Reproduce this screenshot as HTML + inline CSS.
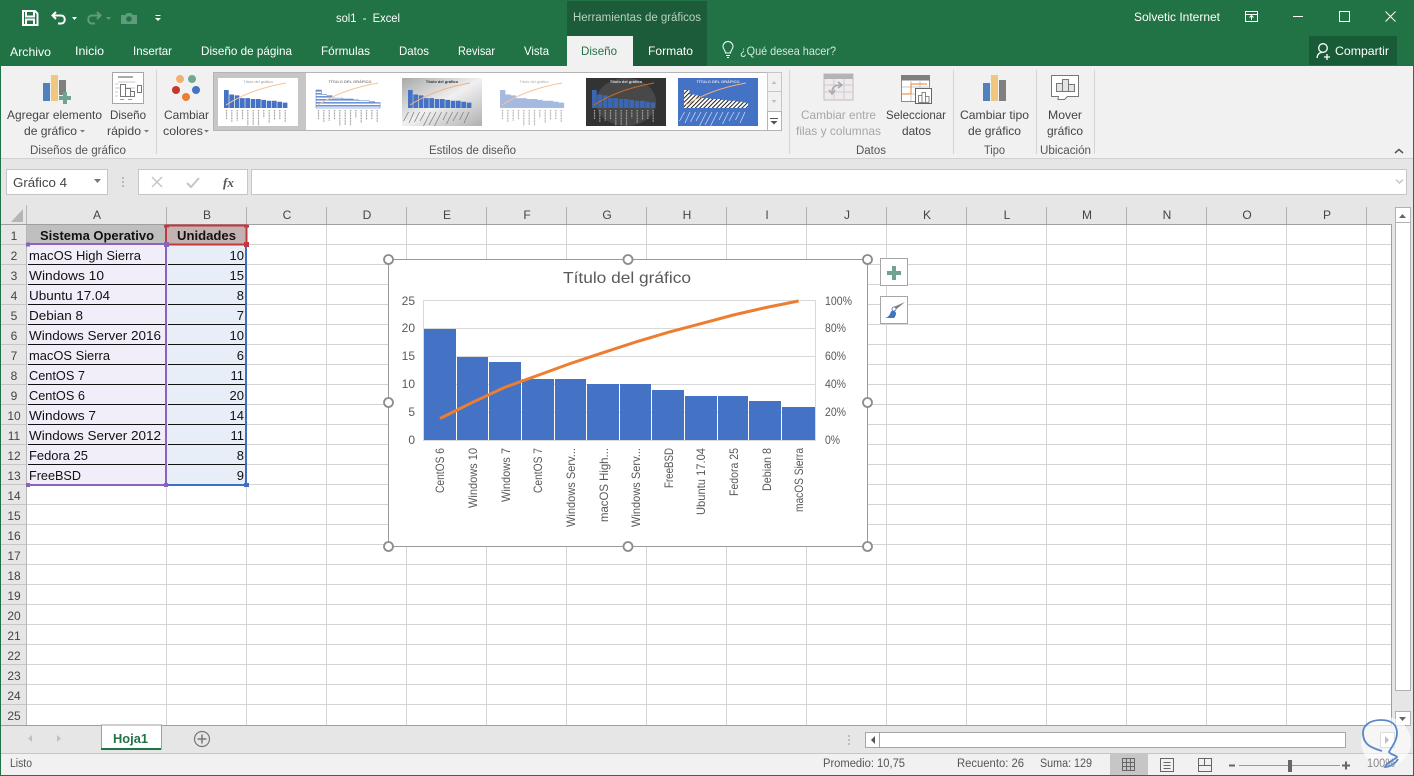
<!DOCTYPE html>
<html lang="es"><head><meta charset="utf-8"><title>sol1 - Excel</title>
<style>
html,body{margin:0;padding:0;background:#e6e6e6;width:1414px;height:776px;overflow:hidden}
svg{display:block;font-family:"Liberation Sans",sans-serif}
.t{fill:#fff;font-size:12px}
.r{fill:#444;font-size:12px}
.d{fill:#a6a6a6;font-size:12px}
.g{fill:#555;font-size:11.5px}
.h{fill:#444;font-size:12px;text-anchor:middle}
.c{fill:#111;font-size:13px}
.n{fill:#111;font-size:13px;text-anchor:end}
.a{fill:#595959;font-size:12px}
.e{fill:#595959;font-size:12px;text-anchor:end}
.s{fill:#555;font-size:11.5px}
</style></head><body>
<svg width="1414" height="776" viewBox="0 0 1414 776" xmlns="http://www.w3.org/2000/svg">
<defs>
<linearGradient id="gg" x1="0" y1="0" x2="1" y2="1"><stop offset="0" stop-color="#a8a8a8"/><stop offset=".5" stop-color="#f0f0f0"/><stop offset="1" stop-color="#b0b0b0"/></linearGradient>
<pattern id="hb" width="3" height="3" patternUnits="userSpaceOnUse"><rect width="3" height="3" fill="#fff"/><rect y="0" width="3" height="1.6" fill="#6f93d4"/></pattern>
<pattern id="hd" width="3" height="3" patternUnits="userSpaceOnUse" patternTransform="rotate(45)"><rect width="3" height="3" fill="#fff"/><rect width="1" height="3" fill="#222"/></pattern>
<path id="b" d="M6 12h4.7V30H6zM11.3 16.5h4.7V30h-4.7zM16.7 17.4h4.7V30h-4.7zM22 20.1h4.7V30H22zM27.3 20.1h4.7V30h-4.7zM32.7 21h4.7v9h-4.7zM38 21h4.7v9H38zM43.3 21.9H48V30h-4.7zM48.7 22.8h4.7V30h-4.7zM54 22.8h4.7V30H54zM59.3 23.7H64V30h-4.7zM64.7 24.6h4.7V30h-4.7z"/>
<path id="f" d="M6 12h5.4v4.5h5.3v.9h5.3v2.7h10.7v.9h10.6v.9h5.4v.9h10.6v.9h5.4v.9h5.4V30H6z"/>
<path id="c" d="M8 27C25 16 45 9 68 5" fill="none" stroke-width="1"/>
<path id="l" d="M8.5 32v9M13.8 32v12M19.2 32v11M24.5 32v9M29.8 32v16M35.2 32v15M40.5 32v16M45.8 32v8M51.2 32v13M56.5 32v10M61.8 32v9M67.2 32v12" fill="none" stroke-width="1.2" stroke-dasharray="1 .6"/>
<path id="s" d="M6.5 34l-5 9M12 34l-5 11M17.5 34l-5 10M23 34l-5 9M28.5 34l-7 14M34 34l-7 13M39.5 34l-7 14M45 34l-4 8M50.5 34l-6 12M56 34l-5 9M61.5 34l-4 8M67 34l-5 11" fill="none" stroke-width=".7"/>
</defs>

<!-- top green -->
<rect width="1414" height="776" fill="#e6e6e6"/>
<rect width="1414" height="66" fill="#217346"/>
<rect x="567" y="1" width="140" height="65" fill="#1d5c3a"/>
<rect x="567" y="36" width="66" height="30" fill="#f1f1f1"/>
<rect x="1309" y="36" width="88" height="29" fill="#185c37"/>

<!-- QAT -->
<path d="M23 11h12l2.500 2.500V25H23zM26 11.500v5h8v-5M26 25v-5.500h8V25" fill="none" stroke="#fff" stroke-width="2"/>
<path d="M56 12l-3.500 3.500L56 19M53 15.500h8c5 0 5 8 0 8h-3" fill="none" stroke="#fff" stroke-width="2"/>
<path d="M72 17h5l-2.500 3z" fill="#fff"/>
<path d="M97 12l3.500 3.500L97 19M100 15.500h-8c-5 0-5 8 0 8h3" fill="none" stroke="#5f9c7c" stroke-width="2"/>
<path d="M106 17h5l-2.500 3z" fill="#5f9c7c"/>
<path d="M121 15h4l2-2h4l2 2h4v9h-16z" fill="#5f9c7c"/><circle cx="129" cy="19" r="2.800" fill="#217346"/>
<path d="M155.500 15h5v1h-5zM155 18h6l-3 3z" fill="#fff"/>

<text x="336" y="22" class="t" textLength="64" lengthAdjust="spacingAndGlyphs" xml:space="preserve">sol1  -  Excel</text>
<text x="573" y="21" class="t" style="fill:#b6d2c1;font-size:11.500px" textLength="128" lengthAdjust="spacingAndGlyphs">Herramientas de gráficos</text>
<text x="1134" y="21" class="t" textLength="86" lengthAdjust="spacingAndGlyphs">Solvetic Internet</text>

<!-- window buttons -->
<path d="M1245.500 11.500h12v10h-12zM1245.500 14.500h12M1251.500 20v-4M1249.500 17.500l2-2 2 2" fill="none" stroke="#fff"/>
<path d="M1293 16.500h10" stroke="#fff"/>
<rect x="1339.500" y="11.500" width="10" height="10" fill="none" stroke="#fff"/>
<path d="M1385.500 11.500l10 10M1395.500 11.500l-10 10" stroke="#fff" fill="none"/>

<!-- tabs -->
<text x="10" y="56" class="t" textLength="41" lengthAdjust="spacingAndGlyphs">Archivo</text>
<text x="75" y="55" class="t" textLength="29" lengthAdjust="spacingAndGlyphs">Inicio</text>
<text x="133" y="55" class="t" textLength="39" lengthAdjust="spacingAndGlyphs">Insertar</text>
<text x="201" y="55" class="t" textLength="91" lengthAdjust="spacingAndGlyphs">Diseño de página</text>
<text x="321" y="55" class="t" textLength="49" lengthAdjust="spacingAndGlyphs">Fórmulas</text>
<text x="399" y="55" class="t" textLength="30" lengthAdjust="spacingAndGlyphs">Datos</text>
<text x="458" y="55" class="t" textLength="37" lengthAdjust="spacingAndGlyphs">Revisar</text>
<text x="524" y="55" class="t" textLength="25" lengthAdjust="spacingAndGlyphs">Vista</text>
<text x="581" y="55" class="t" style="fill:#217346" textLength="36" lengthAdjust="spacingAndGlyphs">Diseño</text>
<text x="648" y="55" class="t" textLength="45" lengthAdjust="spacingAndGlyphs">Formato</text>
<path d="M725.500 53c0-3-2.500-3.500-2.500-6.500a5 5 0 0 1 10 0c0 3-2.500 3.500-2.500 6.500zM726 55.500h4M727 57.500h2" fill="none" stroke="#fff"/>
<text x="740" y="55" class="t" style="fill:#d5e6dc" textLength="96" lengthAdjust="spacingAndGlyphs">¿Qué desea hacer?</text>
<circle cx="1323" cy="48" r="4.300" fill="none" stroke="#fff" stroke-width="1.300"/>
<path d="M1317 58c.5-4 2.500-5.500 5-5.500M1327 54v6M1324 57h6" fill="none" stroke="#fff" stroke-width="1.300"/>
<text x="1335" y="55" class="t" textLength="54" lengthAdjust="spacingAndGlyphs">Compartir</text>

<!-- ribbon -->
<rect x="1" y="66" width="1412" height="92" fill="#f1f1f1"/>
<rect x="1" y="158" width="1412" height="1" fill="#d0d0d0"/>
<path d="M156.500 70v84M789.500 70v84M953.500 70v84M1036.500 70v84M1094.500 70v84" stroke="#d4d4d4"/>

<rect x="43" y="83" width="7" height="18" fill="#4f81bd"/>
<rect x="51" y="75" width="7" height="26" fill="#f0c77f"/>
<rect x="59" y="80" width="7" height="15" fill="#7f7f7f"/>
<path d="M63 92h4v4h4v4h-4v4h-4v-4h-4v-4h4z" fill="#6fa58e"/>
<text x="7" y="119" class="r" textLength="95" lengthAdjust="spacingAndGlyphs">Agregar elemento</text>
<text x="24" y="135" class="r" textLength="53" lengthAdjust="spacingAndGlyphs">de gráfico</text>
<path d="M80 130h5l-2.500 2.500z" fill="#777"/>

<rect x="112.500" y="72.500" width="31" height="31" fill="#fff" stroke="#a6a6a6"/>
<rect x="118" y="76" width="15" height="2" fill="#aaa"/>
<path d="M115 84h3M115 88h3M115 92h3M115 96h3M118 82h17M118 88h17" stroke="#c8c8c8"/>
<path d="M120.500 96.500V84.500h5v12zM125.500 96.500V88.500h5v8zM130.500 96.500V91.500h4v5z" fill="#fff" stroke="#777"/>
<rect x="137.500" y="85.500" width="4" height="7" fill="#fff" stroke="#777"/>
<path d="M120 99.500h4M128 99.500h4" stroke="#999"/>
<text x="110" y="119" class="r" textLength="36" lengthAdjust="spacingAndGlyphs">Diseño</text>
<text x="107" y="135" class="r" textLength="34" lengthAdjust="spacingAndGlyphs">rápido</text>
<path d="M144 130h5l-2.500 2.500z" fill="#777"/>

<circle cx="180" cy="79" r="4" fill="#f0b070"/><circle cx="192" cy="79" r="4" fill="#70a890"/>
<circle cx="176" cy="90" r="4" fill="#c8352f"/><circle cx="196" cy="90" r="4" fill="#4472c4"/>
<circle cx="186" cy="97" r="4" fill="#ed7d31"/>
<text x="164" y="119" class="r" textLength="45" lengthAdjust="spacingAndGlyphs">Cambiar</text>
<text x="163" y="135" class="r" textLength="40" lengthAdjust="spacingAndGlyphs">colores</text>
<path d="M204 130h5l-2.500 2.500z" fill="#777"/>

<!-- gallery -->
<rect x="213.500" y="72.500" width="554" height="58" fill="#fff" stroke="#b4b4b4"/>
<rect x="214" y="73" width="92" height="57" fill="#c6c6c6"/>
<rect x="767.500" y="72.500" width="14" height="19" fill="#f1f1f1" stroke="#c6c6c6"/>
<rect x="767.500" y="91.500" width="14" height="20" fill="#f1f1f1" stroke="#c6c6c6"/>
<rect x="767.500" y="111.500" width="14" height="19" fill="#fff" stroke="#b4b4b4"/>
<path d="M771.500 84h5l-2.500-3z" fill="#c0c0c0"/><path d="M771.500 100h5l-2.500 3z" fill="#c0c0c0"/>
<path d="M770 118h8v1h-8zM770.500 121h7l-3.500 3.500z" fill="#555"/>

<g transform="translate(218 78)"><rect width="80" height="48" fill="#fff"/><text x="40" y="5" font-size="4" fill="#999" text-anchor="middle">Título del gráfico</text><use href="#b" fill="#4472c4"/><use href="#c" stroke="#f5c49b"/><use href="#l" stroke="#999"/></g>
<g transform="translate(310 78)"><rect width="80" height="48" fill="#fff"/><text x="40" y="5" font-size="4" font-weight="bold" fill="#888" text-anchor="middle">TÍTULO DEL GRÁFICO</text><use href="#f" fill="url(#hb)" stroke="#4472c4" stroke-width=".5"/><use href="#c" stroke="#f5c49b"/><use href="#l" stroke="#999"/></g>
<g transform="translate(402 78)"><rect width="80" height="48" fill="url(#gg)"/><text x="40" y="5" font-size="4" font-weight="bold" fill="#333" text-anchor="middle">Título del gráfico</text><use href="#b" fill="#4472c4"/><use href="#c" stroke="#f0b080"/><use href="#s" stroke="#777"/></g>
<g transform="translate(494 78)"><rect width="80" height="48" fill="#fff"/><text x="40" y="5" font-size="4" fill="#aaa" text-anchor="middle">Título del gráfico</text><use href="#f" fill="#a6b9e0"/><use href="#c" stroke="#f5c49b"/><use href="#l" stroke="#aaa"/></g>
<g transform="translate(586 78)"><rect width="80" height="48" fill="#333"/><ellipse cx="40" cy="24" rx="30" ry="24" fill="#484848"/><text x="40" y="5" font-size="4" font-weight="bold" fill="#ddd" text-anchor="middle">Título del gráfico</text><use href="#b" fill="#3b66b2"/><use href="#c" stroke="#c56a2c"/><use href="#l" stroke="#aaa"/></g>
<g transform="translate(678 78)"><rect width="80" height="48" fill="#4472c4"/><text x="40" y="5" font-size="4" font-weight="bold" fill="#dde" text-anchor="middle">TÍTULO DEL GRÁFICO</text><use href="#f" fill="url(#hd)"/><use href="#c" stroke="#f0b080"/><use href="#s" stroke="#d8e2f4"/></g>

<!-- datos icons -->
<rect x="824" y="74" width="29" height="26" fill="#eeeaee" stroke="#c0bcc0"/>
<rect x="824" y="74" width="29" height="5" fill="#b5b3b5"/>
<path d="M824 85h29M824 92h29M834 79v21M844 79v21" stroke="#cfcbcf"/>
<path d="M832 92c0-5 3-7 9-7M838 82l4 3-4 3M829 90l3 4 3-4" fill="none" stroke="#a8a8a8" stroke-width="1.500"/>
<rect x="901.500" y="75.500" width="28" height="26" fill="#fff" stroke="#8c8c8c"/>
<rect x="901" y="75" width="29" height="5.500" fill="#7f7f7f"/>
<path d="M902 87h28M902 94h28M911 80v21M920 80v21" stroke="#c8c8c8"/>
<path d="M911 94V84h16M902 94h9" fill="none" stroke="#ed7d31"/>
<rect x="915.500" y="88.500" width="16" height="15" fill="#fff" stroke="#666"/>
<path d="M918.500 102.500v-7h3.500v7zM922 102.500v-10h3.500v10zM925.500 102.500v-6h3.500v6z" fill="#fff" stroke="#666" stroke-width=".8"/>
<rect x="983" y="83" width="7" height="18" fill="#4f81bd"/>
<rect x="991" y="75" width="7" height="26" fill="#f0c77f"/>
<rect x="999" y="80" width="7" height="21" fill="#7f7f7f"/>
<path d="M1051.500 75.500h27v21h-11l-3 3h-6.500l.5-3h-7z" fill="#fff" stroke="#777"/>
<path d="M1056.500 91.500v-8h6v8zM1062.500 91.500v-12h6v12zM1068.500 91.500v-7h6v7z" fill="#e4e4e4" stroke="#777"/>
<text x="801" y="119" class="d" textLength="75" lengthAdjust="spacingAndGlyphs">Cambiar entre</text>
<text x="796" y="135" class="d" textLength="85" lengthAdjust="spacingAndGlyphs">filas y columnas</text>
<text x="886" y="119" class="r" textLength="60" lengthAdjust="spacingAndGlyphs">Seleccionar</text>
<text x="902" y="135" class="r" textLength="29" lengthAdjust="spacingAndGlyphs">datos</text>
<text x="960" y="119" class="r" textLength="69" lengthAdjust="spacingAndGlyphs">Cambiar tipo</text>
<text x="968" y="135" class="r" textLength="53" lengthAdjust="spacingAndGlyphs">de gráfico</text>
<text x="1048" y="119" class="r" textLength="34" lengthAdjust="spacingAndGlyphs">Mover</text>
<text x="1047" y="135" class="r" textLength="36" lengthAdjust="spacingAndGlyphs">gráfico</text>
<text x="30" y="154" class="g" textLength="96" lengthAdjust="spacingAndGlyphs">Diseños de gráfico</text>
<text x="429" y="154" class="g" textLength="87" lengthAdjust="spacingAndGlyphs">Estilos de diseño</text>
<text x="856" y="154" class="g" textLength="30" lengthAdjust="spacingAndGlyphs">Datos</text>
<text x="984" y="154" class="g" textLength="21" lengthAdjust="spacingAndGlyphs">Tipo</text>
<text x="1040" y="154" class="g" textLength="51" lengthAdjust="spacingAndGlyphs">Ubicación</text>
<path d="M1395 153l4-3.500 4 3.500" fill="none" stroke="#555" stroke-width="1.500"/>

<!-- formula bar -->
<rect x="6.500" y="169.500" width="101" height="25" fill="#fff" stroke="#c6c6c6"/>
<text x="13" y="187" fill="#444" font-size="12.500" textLength="54" lengthAdjust="spacingAndGlyphs">Gráfico 4</text>
<path d="M94 179h7l-3.500 4z" fill="#777"/>
<path d="M123 177v2M123 181v2M123 185v2" stroke="#aaa" stroke-width="1.500"/>
<rect x="138.500" y="169.500" width="109" height="25" fill="#fff" stroke="#c6c6c6"/>
<path d="M152 177l10 10M162 177l-10 10" stroke="#c6c6c6" stroke-width="1.500"/>
<path d="M187 183l4 4 8-9" fill="none" stroke="#c6c6c6" stroke-width="2"/>
<text x="223" y="187" font-family="Liberation Serif,serif" font-style="italic" font-weight="bold" font-size="13" fill="#555">fx</text>
<rect x="251.500" y="169.500" width="1155" height="25" fill="#fff" stroke="#c6c6c6"/>
<path d="M1396 179.500l3.500 3.500 3.500-3.500" fill="none" stroke="#c6c6c6" stroke-width="1.500"/>

<!-- sheet area -->
<rect x="27" y="225" width="1365" height="500" fill="#fff"/>
<path d="M27 244.500H1391M27 264.500H1391M27 284.500H1391M27 304.500H1391M27 324.500H1391M27 344.500H1391M27 364.500H1391M27 384.500H1391M27 404.500H1391M27 424.500H1391M27 444.500H1391M27 464.500H1391M27 484.500H1391M27 504.500H1391M27 524.500H1391M27 544.500H1391M27 564.500H1391M27 584.500H1391M27 604.500H1391M27 624.500H1391M27 644.500H1391M27 664.500H1391M27 684.500H1391M27 704.500H1391" stroke="#d4d4d4"/>
<path d="M166.500 225V725M246.500 225V725M326.500 225V725M406.500 225V725M486.500 225V725M566.500 225V725M646.500 225V725M726.500 225V725M806.500 225V725M886.500 225V725M966.500 225V725M1046.500 225V725M1126.500 225V725M1206.500 225V725M1286.500 225V725M1366.500 225V725" stroke="#d4d4d4"/>
<path d="M1 244.500H26M1 264.500H26M1 284.500H26M1 304.500H26M1 324.500H26M1 344.500H26M1 364.500H26M1 384.500H26M1 404.500H26M1 424.500H26M1 444.500H26M1 464.500H26M1 484.500H26M1 504.500H26M1 524.500H26M1 544.500H26M1 564.500H26M1 584.500H26M1 604.500H26M1 624.500H26M1 644.500H26M1 664.500H26M1 684.500H26M1 704.500H26" stroke="#c6c6c6"/>
<path d="M26.500 205V725" stroke="#b8b8b8"/>
<path d="M166.500 207V224M246.500 207V224M326.500 207V224M406.500 207V224M486.500 207V224M566.500 207V224M646.500 207V224M726.500 207V224M806.500 207V224M886.500 207V224M966.500 207V224M1046.500 207V224M1126.500 207V224M1206.500 207V224M1286.500 207V224M1366.500 207V224" stroke="#b1b1b1"/>
<path d="M1 224.500H1391.500V725" fill="none" stroke="#9f9f9f"/>
<path d="M1 725.500H1392" stroke="#9f9f9f"/>
<path d="M23 209v13H11z" fill="#b5b5b5"/>

<text x="97" y="219" class="h">A</text><text x="207" y="219" class="h">B</text><text x="287" y="219" class="h">C</text><text x="367" y="219" class="h">D</text><text x="447" y="219" class="h">E</text><text x="527" y="219" class="h">F</text><text x="607" y="219" class="h">G</text><text x="687" y="219" class="h">H</text><text x="767" y="219" class="h">I</text><text x="847" y="219" class="h">J</text><text x="927" y="219" class="h">K</text><text x="1007" y="219" class="h">L</text><text x="1087" y="219" class="h">M</text><text x="1167" y="219" class="h">N</text><text x="1247" y="219" class="h">O</text><text x="1327" y="219" class="h">P</text>
<text x="14" y="240" class="h">1</text><text x="14" y="260" class="h">2</text><text x="14" y="280" class="h">3</text><text x="14" y="300" class="h">4</text><text x="14" y="320" class="h">5</text><text x="14" y="340" class="h">6</text><text x="14" y="360" class="h">7</text><text x="14" y="380" class="h">8</text><text x="14" y="400" class="h">9</text><text x="14" y="420" class="h">10</text><text x="14" y="440" class="h">11</text><text x="14" y="460" class="h">12</text><text x="14" y="480" class="h">13</text><text x="14" y="500" class="h">14</text><text x="14" y="520" class="h">15</text><text x="14" y="540" class="h">16</text><text x="14" y="560" class="h">17</text><text x="14" y="580" class="h">18</text><text x="14" y="600" class="h">19</text><text x="14" y="620" class="h">20</text><text x="14" y="640" class="h">21</text><text x="14" y="660" class="h">22</text><text x="14" y="680" class="h">23</text><text x="14" y="700" class="h">24</text><text x="14" y="720" class="h">25</text>

<!-- table -->
<rect x="27" y="225" width="139" height="20" fill="#bfbfbf"/>
<rect x="167" y="225" width="80" height="20" fill="#c4b2b2"/>
<rect x="27" y="245" width="139" height="240" fill="#f2eef9"/>
<rect x="167" y="245" width="79" height="240" fill="#e8eef8"/>
<path d="M28 264.500H165M28 284.500H165M28 304.500H165M28 324.500H165M28 344.500H165M28 364.500H165M28 384.500H165M28 404.500H165M28 424.500H165M28 444.500H165M28 464.500H165M168 264.500H245M168 284.500H245M168 304.500H245M168 324.500H245M168 344.500H245M168 364.500H245M168 384.500H245M168 404.500H245M168 424.500H245M168 444.500H245M168 464.500H245" stroke="#111"/>
<rect x="27" y="243" width="140" height="2" fill="#8a63bd"/>
<rect x="165" y="245" width="2" height="240" fill="#8a63bd"/>
<rect x="27" y="484" width="140" height="2" fill="#8a63bd"/>
<rect x="245" y="245" width="2" height="240" fill="#3f6fc4"/>
<rect x="167" y="484" width="80" height="2" fill="#3f6fc4"/>
<rect x="166" y="225.500" width="80.500" height="19" fill="none" stroke="#c0393f" stroke-width="2"/>
<rect x="164" y="225" width="5" height="2.500" fill="#c0393f"/><rect x="244" y="225" width="5" height="2.500" fill="#c0393f"/>
<rect x="244" y="242" width="5" height="5" fill="#c0393f"/>
<rect x="164" y="242" width="5" height="5" fill="#8a63bd"/>
<rect x="26" y="242.500" width="4" height="4" fill="#8a63bd"/>
<rect x="26" y="483" width="4" height="4" fill="#8a63bd"/>
<rect x="164" y="483" width="4" height="4" fill="#8a63bd"/>
<rect x="244" y="483" width="5" height="4" fill="#3f6fc4"/>

<text x="40" y="240" class="c" font-weight="bold" textLength="114" lengthAdjust="spacingAndGlyphs">Sistema Operativo</text>
<text x="177" y="240" class="c" font-weight="bold" textLength="59" lengthAdjust="spacingAndGlyphs">Unidades</text>
<text x="29" y="260" class="c" textLength="112" lengthAdjust="spacingAndGlyphs">macOS High Sierra</text><text x="244" y="260" class="n">10</text>
<text x="29" y="280" class="c" textLength="75" lengthAdjust="spacingAndGlyphs">Windows 10</text><text x="244" y="280" class="n">15</text>
<text x="29" y="300" class="c" textLength="81" lengthAdjust="spacingAndGlyphs">Ubuntu 17.04</text><text x="244" y="300" class="n">8</text>
<text x="29" y="320" class="c" textLength="54" lengthAdjust="spacingAndGlyphs">Debian 8</text><text x="244" y="320" class="n">7</text>
<text x="29" y="340" class="c" textLength="132" lengthAdjust="spacingAndGlyphs">Windows Server 2016</text><text x="244" y="340" class="n">10</text>
<text x="29" y="360" class="c" textLength="81" lengthAdjust="spacingAndGlyphs">macOS Sierra</text><text x="244" y="360" class="n">6</text>
<text x="29" y="380" class="c" textLength="56" lengthAdjust="spacingAndGlyphs">CentOS 7</text><text x="244" y="380" class="n">11</text>
<text x="29" y="400" class="c" textLength="56" lengthAdjust="spacingAndGlyphs">CentOS 6</text><text x="244" y="400" class="n">20</text>
<text x="29" y="420" class="c" textLength="67" lengthAdjust="spacingAndGlyphs">Windows 7</text><text x="244" y="420" class="n">14</text>
<text x="29" y="440" class="c" textLength="132" lengthAdjust="spacingAndGlyphs">Windows Server 2012</text><text x="244" y="440" class="n">11</text>
<text x="29" y="460" class="c" textLength="59" lengthAdjust="spacingAndGlyphs">Fedora 25</text><text x="244" y="460" class="n">8</text>
<text x="29" y="480" class="c" textLength="52" lengthAdjust="spacingAndGlyphs">FreeBSD</text><text x="244" y="480" class="n">9</text>

<!-- chart -->
<rect x="388.500" y="259.500" width="479" height="287" fill="#fff" stroke="#999" stroke-width="1"/>
<text x="563" y="283" fill="#595959" font-size="16" textLength="128" lengthAdjust="spacingAndGlyphs">Título del gráfico</text>
<path d="M423 300.500H816M423 328.500H816M423 356.500H816M423 384.500H816M423 412.500H816M423.500 300V440M815.500 300V440" stroke="#d9d9d9" fill="none"/>
<path d="M424 329h32v111h-32zM457 357h31v83h-31zM489 362h32v78h-32zM522 379h32v61h-32zM555 379h31v61h-31zM587 384h32v56h-32zM620 384h31v56h-31zM652 390h32v50h-32zM685 396h32v44h-32zM718 396h30v44h-30zM749 401h32v39h-32zM782 407h33v33h-33z" fill="#4472c4"/>
<path d="M423 440.500H816" stroke="#d9d9d9"/>
<path d="M440 418.500L472.600 402.300 505.200 387.200 537.800 375.400 570.400 363.500 603 352.700 635.600 342 668.200 332.300 700.800 323.700 733.400 315 766 307.500 798.600 301" fill="none" stroke="#ed7d31" stroke-width="3"/>
<text x="415" y="305" class="e">25</text><text x="415" y="332" class="e">20</text><text x="415" y="360" class="e">15</text><text x="415" y="388" class="e">10</text><text x="415" y="416" class="e">5</text><text x="415" y="444" class="e">0</text>
<text x="825" y="305" class="a" textLength="27" lengthAdjust="spacingAndGlyphs">100%</text><text x="825" y="332" class="a" textLength="21" lengthAdjust="spacingAndGlyphs">80%</text><text x="825" y="360" class="a" textLength="21" lengthAdjust="spacingAndGlyphs">60%</text><text x="825" y="388" class="a" textLength="21" lengthAdjust="spacingAndGlyphs">40%</text><text x="825" y="416" class="a" textLength="21" lengthAdjust="spacingAndGlyphs">20%</text><text x="825" y="444" class="a" textLength="15" lengthAdjust="spacingAndGlyphs">0%</text>
<g class="a">
<text transform="translate(444 448) rotate(-90)" text-anchor="end" textLength="45" lengthAdjust="spacingAndGlyphs">CentOS 6</text>
<text transform="translate(477 448) rotate(-90)" text-anchor="end" textLength="60" lengthAdjust="spacingAndGlyphs">Windows 10</text>
<text transform="translate(510 448) rotate(-90)" text-anchor="end" textLength="54" lengthAdjust="spacingAndGlyphs">Windows 7</text>
<text transform="translate(542 448) rotate(-90)" text-anchor="end" textLength="45" lengthAdjust="spacingAndGlyphs">CentOS 7</text>
<text transform="translate(575 448) rotate(-90)" text-anchor="end" textLength="79" lengthAdjust="spacingAndGlyphs">Windows Serv...</text>
<text transform="translate(608 448) rotate(-90)" text-anchor="end" textLength="74" lengthAdjust="spacingAndGlyphs">macOS High...</text>
<text transform="translate(640 448) rotate(-90)" text-anchor="end" textLength="79" lengthAdjust="spacingAndGlyphs">Windows Serv...</text>
<text transform="translate(673 448) rotate(-90)" text-anchor="end" textLength="40" lengthAdjust="spacingAndGlyphs">FreeBSD</text>
<text transform="translate(705 448) rotate(-90)" text-anchor="end" textLength="67" lengthAdjust="spacingAndGlyphs">Ubuntu 17.04</text>
<text transform="translate(738 448) rotate(-90)" text-anchor="end" textLength="48" lengthAdjust="spacingAndGlyphs">Fedora 25</text>
<text transform="translate(771 448) rotate(-90)" text-anchor="end" textLength="43" lengthAdjust="spacingAndGlyphs">Debian 8</text>
<text transform="translate(803 448) rotate(-90)" text-anchor="end" textLength="64" lengthAdjust="spacingAndGlyphs">macOS Sierra</text>
</g>
<g fill="#fff" stroke="#8c8c8c" stroke-width="1.800">
<circle cx="388.500" cy="259.500" r="4.500"/><circle cx="628" cy="259.500" r="4.500"/><circle cx="867.500" cy="259.500" r="4.500"/>
<circle cx="388.500" cy="402.500" r="4.500"/><circle cx="867.500" cy="402.500" r="4.500"/>
<circle cx="388.500" cy="546.500" r="4.500"/><circle cx="628" cy="546.500" r="4.500"/><circle cx="867.500" cy="546.500" r="4.500"/>
</g>
<rect x="880.500" y="258.500" width="27" height="27" fill="#fff" stroke="#a6a6a6"/>
<path d="M892 266h4v5h5v4h-5v5h-4v-5h-5v-4h5z" fill="#6fa58e"/>
<rect x="880.500" y="296.500" width="27" height="27" fill="#fff" stroke="#a6a6a6"/>
<path d="M905 302l-9 7.500-2.500-2.500z" fill="#7f7f7f"/>
<path d="M885 318c3-.5 5-3 6-6.500 2-2 5-.5 5 2 0 2-1 3.500-2 4.500z" fill="#4472c4"/>
<circle cx="894" cy="309" r="2" fill="#fff" stroke="#4472c4" stroke-width=".8"/>

<!-- vertical scrollbar -->
<rect x="1395.500" y="207.500" width="15" height="15" fill="#fff" stroke="#b1b1b1"/>
<path d="M1399 218h7l-3.500-4z" fill="#666"/>
<rect x="1395.500" y="222.500" width="15" height="468" fill="#fff" stroke="#b1b1b1"/>
<rect x="1395.500" y="711.500" width="15" height="14" fill="#fff" stroke="#b1b1b1"/>
<path d="M1399 717h7l-3.500 4z" fill="#666"/>

<!-- sheet tabs -->
<path d="M32 735v7l-4-3.500zM57 735v7l4-3.500z" fill="#c0c0c0"/>
<rect x="101.500" y="725" width="60" height="24" fill="#fff" stroke="#9f9f9f"/>
<rect x="101" y="748" width="60" height="2" fill="#217346"/>
<text x="113" y="743" fill="#217346" font-size="13" font-weight="bold" textLength="35" lengthAdjust="spacingAndGlyphs">Hoja1</text>
<circle cx="202" cy="739" r="7.500" fill="none" stroke="#777" stroke-width="1.200"/>
<path d="M197.500 739h9M202 734.500v9" stroke="#777" stroke-width="1.500"/>
<path d="M849 739v2M849 743v2M849 735v2" stroke="#b0b0b0" stroke-width="1.500"/>
<rect x="865.500" y="732.500" width="480" height="15" fill="#fff" stroke="#a6a6a6"/>
<rect x="865.500" y="732.500" width="14" height="15" fill="#fff" stroke="#a6a6a6"/>
<path d="M875 736v8l-4-4z" fill="#555"/>
<rect x="1380.500" y="732.500" width="14" height="15" fill="#fff" stroke="#a6a6a6"/>
<path d="M1385 736v8l4-4z" fill="#555"/>

<!-- status -->
<rect x="1" y="754" width="1412" height="21" fill="#f1f1f1"/>
<rect x="1" y="753" width="1412" height="1" fill="#c6c6c6"/>
<text x="10" y="767" class="s" textLength="22" lengthAdjust="spacingAndGlyphs">Listo</text>
<text x="823" y="767" class="s" textLength="82" lengthAdjust="spacingAndGlyphs">Promedio: 10,75</text>
<text x="957" y="767" class="s" textLength="67" lengthAdjust="spacingAndGlyphs">Recuento: 26</text>
<text x="1040" y="767" class="s" textLength="52" lengthAdjust="spacingAndGlyphs">Suma: 129</text>
<rect x="1110" y="754" width="38" height="21" fill="#c6c6c6"/>
<path d="M1122.500 758.500h12v12h-12zM1126.500 758.500v12M1130.500 758.500v12M1122.500 762.500h12M1122.500 766.500h12" fill="none" stroke="#666"/>
<path d="M1160.500 758.500h13v13h-13zM1163.500 762.500h7M1163.500 765.500h7M1163.500 768.500h7" fill="none" stroke="#666"/>
<path d="M1198.500 758.500h13v13h-13zM1204.500 758.500v7h-6M1204.500 765.500h7" fill="none" stroke="#666"/>
<path d="M1229 765.500h6" stroke="#666" stroke-width="2"/>
<path d="M1239 765.500h101" stroke="#999"/>
<rect x="1288" y="760" width="4" height="12" fill="#666"/>
<path d="M1342 765.500h8M1346 761.500v8" stroke="#666" stroke-width="2"/>

<!-- window border -->
<rect x="0" y="66" width="1" height="710" fill="#217346"/>
<rect x="1413" y="66" width="1" height="710" fill="#217346"/>
<rect x="0" y="775" width="1414" height="1" fill="#217346"/>

<!-- watermark -->
<circle cx="1386" cy="742" r="25" fill="#fff" fill-opacity=".62"/>
<text x="1367" y="767" class="s" style="fill:#888" textLength="28" lengthAdjust="spacingAndGlyphs">100%</text>
<path d="M1382 751C1372 748 1363 745 1363 733C1363 724 1372 720 1381 720C1392 720 1397 725 1397 733C1397 741 1392 746 1389 752C1391 755 1396 755 1397 757C1393 761 1387 762 1385 767C1390 767 1396 763 1398 759" fill="none" stroke="#5b88c8" stroke-width="1.800"/>
</svg>
</body></html>
